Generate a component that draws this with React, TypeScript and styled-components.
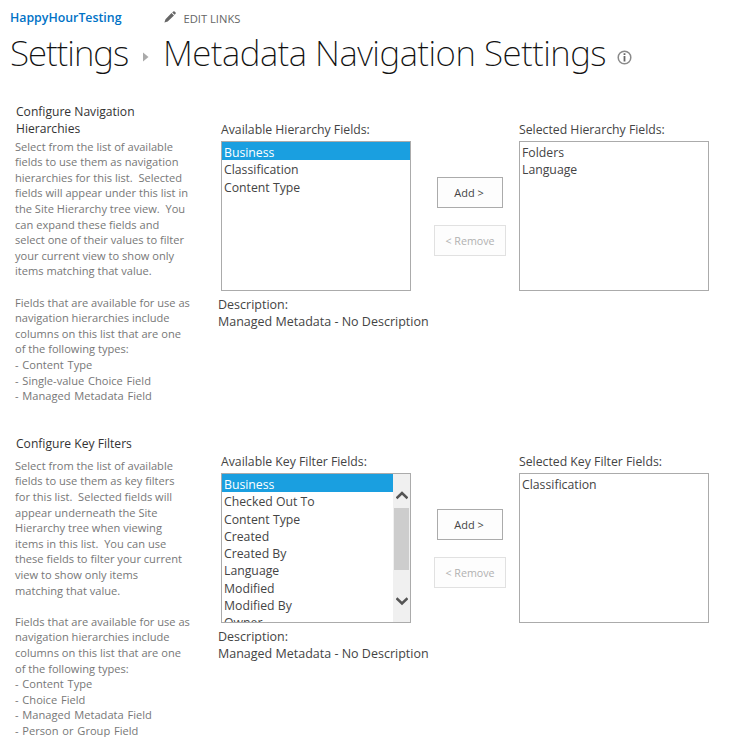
import React from 'react';
import styled, { createGlobalStyle } from 'styled-components';

const GlobalStyle = createGlobalStyle`
  *, *::before, *::after { box-sizing: border-box; }
  html, body { margin: 0; background: #fff; overflow: hidden; }
  body { font-family: "Open Sans", "Noto Sans", sans-serif; color: #444; }
`;

const Page = styled.main`
  width: 732px;
  height: 737px;
  overflow: hidden;
`;

const Header = styled.header`
  height: 102px;
  padding: 9px 0 0 10px;
`;

const LinkBar = styled.nav`
  display: flex;
  height: 18px;
`;

const SiteLink = styled.a`
  width: 154px;
  font-size: 12.35px;
  font-weight: 600;
  line-height: 17px;
  color: #0072c6;
`;

const PencilIcon = styled.svg`
  width: 12px;
  height: 12px;
  margin-top: 2px;
`;

const EditLinks = styled.a`
  margin-left: 7.5px;
  font-size: 11.2px;
  line-height: 19.5px;
  color: #666;
`;

const Title = styled.h1`
  display: flex;
  margin: 2px 0 0;
  font-family: "Noto Sans", "Open Sans", sans-serif;
  font-size: 35px;
  font-weight: 200;
  line-height: 48px;
  color: #111;
  white-space: nowrap;
`;

const Crumb = styled.span<{ $width: number; $tracking: number }>`
  width: ${(p) => p.$width}px;
  letter-spacing: ${(p) => p.$tracking}px;
`;

const CrumbArrow = styled.svg`
  width: 6px;
  height: 10px;
  margin: 23px 14px 0 0;
`;

const InfoIcon = styled.svg`
  width: 15px;
  height: 15px;
  margin: 21px 0 0 8px;
`;

const Section = styled.section`
  display: flex;
  height: 332px;
`;

const Info = styled.div`
  width: 218px;
  padding: 1px 0 0 15px;
`;

const SectionTitle = styled.h2<{ $gap: number }>`
  margin: 0 0 ${(p) => p.$gap}px 1px;
  font-size: 12.1px;
  font-weight: 400;
  line-height: 17.3px;
  color: #333;
  white-space: pre-line;
`;

const Body = styled.p`
  margin: 0;
  font-size: 11.1px;
  line-height: 15.6px;
  color: #777;
  white-space: pre;
`;

const TypeList = styled(Body)`
  word-spacing: 0.9px;
`;

const Picker = styled.div`
  padding-top: 19px;
`;

const Columns = styled.div`
  display: flex;
  margin-left: 3px;
`;

const Label = styled.div`
  height: 20px;
  font-size: 12.25px;
  line-height: 17.3px;
  white-space: nowrap;
`;

const ListBox = styled.div`
  display: flex;
  width: 190px;
  height: 150px;
  border: 1px solid #ababab;
  overflow: hidden;
`;

const Options = styled.ul`
  flex: 1;
  margin: 0;
  padding: 0;
  list-style: none;
`;

const Option = styled.li<{ $selected?: boolean }>`
  height: 17.3px;
  padding-left: 2px;
  font-size: 12.25px;
  line-height: 19.6px;
  background: ${(p) => (p.$selected ? '#1a9fe0' : 'transparent')};
  color: ${(p) => (p.$selected ? '#fff' : '#444')};

  &:first-child {
    height: 18.3px;
    padding-top: 1px;
  }
`;

const ScrollBar = styled.div`
  display: flex;
  flex-direction: column;
  align-items: center;
  width: 17px;
  background: #f0f0f0;
`;

const ScrollArrow = styled.svg<{ $top: number }>`
  width: 12px;
  height: 10px;
  flex: none;
  margin-top: ${(p) => p.$top}px;
`;

const ScrollThumb = styled.div`
  width: 15px;
  height: 62px;
  margin-top: 7px;
  background: #cdcdcd;
`;

const Actions = styled.div`
  display: flex;
  flex-direction: column;
  align-items: center;
  width: 108px;
  padding: 56px 0 0 10px;
`;

const ActionButton = styled.button`
  width: 66px;
  height: 31px;
  margin-bottom: 17px;
  padding: 0 2px 0 0;
  border: 1px solid #ababab;
  background: #fdfdfd;
  font-family: inherit;
  font-size: 11px;
  color: #444;

  &:disabled {
    width: 72px;
    padding-right: 0;
    border-color: #e1e1e1;
    font-size: 10.7px;
    color: #b1b1b1;
  }
`;

const Description = styled.div`
  margin-top: 4.6px;
  font-size: 12.5px;
  line-height: 17.3px;
`;

function Scroller() {
  return (
    <ScrollBar>
      <ScrollArrow $top={17} viewBox="0 0 12 10">
        <path d="M0.5 7.2 6 2l5.5 5.2" fill="none" stroke="#555" strokeWidth="2.6" />
      </ScrollArrow>
      <ScrollThumb />
      <ScrollArrow $top={26} viewBox="0 0 12 10">
        <path d="M0.5 2.3 6 7.5l5.5-5.2" fill="none" stroke="#555" strokeWidth="2.6" />
      </ScrollArrow>
    </ScrollBar>
  );
}

interface FieldListProps {
  label: string;
  items: string[];
  selected?: string;
  scroll?: boolean;
}

function FieldList({ label, items, selected, scroll }: FieldListProps) {
  return (
    <div>
      <Label>{label}</Label>
      <ListBox>
        <Options>
          {items.map((item) => (
            <Option key={item} $selected={item === selected}>{item}</Option>
          ))}
        </Options>
        {scroll && <Scroller />}
      </ListBox>
    </div>
  );
}

interface SettingsSectionProps {
  title: string;
  gap: number;
  body: string;
  types: string[];
  available: FieldListProps;
  chosen: FieldListProps;
}

function SettingsSection({ title, gap, body, types, available, chosen }: SettingsSectionProps) {
  return (
    <Section>
      <Info>
        <SectionTitle $gap={gap}>{title}</SectionTitle>
        <Body>{body}</Body>
        <TypeList>{types.map((type) => `- ${type}`).join('\n')}</TypeList>
      </Info>
      <Picker>
        <Columns>
          <FieldList {...available} />
          <Actions>
            <ActionButton>Add &gt;</ActionButton>
            <ActionButton disabled>&lt; Remove</ActionButton>
          </Actions>
          <FieldList {...chosen} />
        </Columns>
        <Description>
          <div>Description:</div>
          <div>Managed Metadata - No Description</div>
        </Description>
      </Picker>
    </Section>
  );
}

const hierarchyText = `Select from the list of available
fields to use them as navigation
hierarchies for this list.  Selected
fields will appear under this list in
the Site Hierarchy tree view.  You
can expand these fields and
select one of their values to filter
your current view to show only
items matching that value.

Fields that are available for use as
navigation hierarchies include
columns on this list that are one
of the following types:`;

const filterText = `Select from the list of available
fields to use them as key filters
for this list.  Selected fields will
appear underneath the Site
Hierarchy tree when viewing
items in this list.  You can use
these fields to filter your current
view to show only items
matching that value.

Fields that are available for use as
navigation hierarchies include
columns on this list that are one
of the following types:`;

export default function App() {
  return (
    <Page>
      <GlobalStyle />
      <Header>
        <LinkBar>
          <SiteLink>HappyHourTesting</SiteLink>
          <PencilIcon viewBox="0 0 12 12">
            <path d="M0.4 11.6 1.5 8.3 7.5 2 10 4.5 3.7 10.5Z M8.2 1.5 9.3 0.4Q10 0 10.6 0.5L11.6 1.5Q12 2 11.6 2.7L10.6 3.8Z" fill="#666" />
          </PencilIcon>
          <EditLinks>EDIT LINKS</EditLinks>
        </LinkBar>
        <Title>
          <Crumb $width={133} $tracking={-0.95}>Settings</Crumb>
          <CrumbArrow viewBox="0 0 6 10">
            <path d="M0 0.5 5.5 5 0 9.5Z" fill="#aaa" />
          </CrumbArrow>
          <Crumb $width={446} $tracking={-0.47}>Metadata Navigation Settings</Crumb>
          <InfoIcon viewBox="0 0 15 15">
            <circle cx="7.5" cy="7.5" r="6.3" fill="none" stroke="#8a8a8a" strokeWidth="1.5" />
            <path d="M6.6 3.3h1.8v1.8H6.6Z M6.6 6h1.8v5.4H6.6Z" fill="#666" />
          </InfoIcon>
        </Title>
      </Header>
      <SettingsSection
        title={'Configure Navigation\nHierarchies'}
        gap={1}
        body={hierarchyText}
        types={['Content Type', 'Single-value Choice Field', 'Managed Metadata Field']}
        available={{
          label: 'Available Hierarchy Fields:',
          items: ['Business', 'Classification', 'Content Type'],
          selected: 'Business',
        }}
        chosen={{ label: 'Selected Hierarchy Fields:', items: ['Folders', 'Language'] }}
      />
      <SettingsSection
        title="Configure Key Filters"
        gap={5.5}
        body={filterText}
        types={['Content Type', 'Choice Field', 'Managed Metadata Field', 'Person or Group Field']}
        available={{
          label: 'Available Key Filter Fields:',
          items: [
            'Business', 'Checked Out To', 'Content Type', 'Created', 'Created By',
            'Language', 'Modified', 'Modified By', 'Owner',
          ],
          selected: 'Business',
          scroll: true,
        }}
        chosen={{ label: 'Selected Key Filter Fields:', items: ['Classification'] }}
      />
    </Page>
  );
}
